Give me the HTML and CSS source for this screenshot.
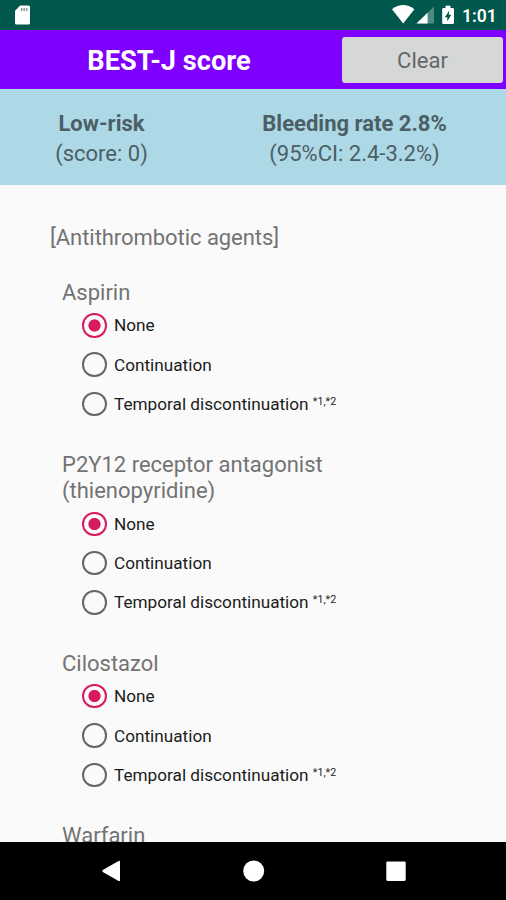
FILE: index.html
```html
<!DOCTYPE html>
<html lang="en">
<head>
<meta charset="utf-8">
<title>BEST-J score</title>
<link rel="stylesheet" href="styles.css">
</head>
<body>
<div class="screen">
  <div class="status">
    <svg class="sd" width="17" height="20" viewBox="0 0 17 20"><path fill="#fff" d="M6.200.5H14.400q1.600 0 1.600 1.600v15.800q0 1.600-1.600 1.600H2.600Q1 19.500 1 17.900V5.800z"/><path stroke="#87958f" stroke-width="1.500" d="M7.700 3v3M10.200 3v3M12.700 3v3"/></svg>
    <svg class="signals" width="66" height="22" viewBox="0 0 66 22"><path fill="#fff" d="M0 5.200Q11.200-3.200 22.400 5.200L11.200 19.500z"/><path fill="#4d8a80" d="M42 2.500V19.500H24.500z"/><path fill="#fff" d="M35.600 8.700V19.500H24.500z"/><path fill="#fff" d="M53.500 1.800h5v2.200h2.200q1.300 0 1.300 1.300v13.400q0 1.300-1.300 1.300h-9.200q-1.300 0-1.300-1.300V5.300q0-1.300 1.300-1.300h2z"/><path fill="#00574b" d="M57.300 6.500l-4.500 6.700h2.500v4l4-6.400h-2.500z"/></svg>
    <span class="clock">1:01</span>
  </div>
  <header class="bar">
    <h1 class="title">BEST-J score</h1>
    <button class="clear">Clear</button>
  </header>
  <section class="result">
    <div class="risk"><strong>Low-risk</strong><span>(score: 0)</span></div>
    <div class="rate"><strong>Bleeding rate 2.8%</strong><span>(95%CI: 2.4-3.2%)</span></div>
  </section>
  <main class="content">
    <h2 class="section">[Antithrombotic agents]</h2>
    <div class="group">
      <h3 class="drug">Aspirin</h3>
      <label class="option"><i class="radio on"></i><span>None</span></label>
      <label class="option"><i class="radio"></i><span>Continuation</span></label>
      <label class="option"><i class="radio"></i><span>Temporal discontinuation <sup>*1,*2</sup></span></label>
    </div>
    <div class="group">
      <h3 class="drug">P2Y12 receptor antagonist<br>(thienopyridine)</h3>
      <label class="option"><i class="radio on"></i><span>None</span></label>
      <label class="option"><i class="radio"></i><span>Continuation</span></label>
      <label class="option"><i class="radio"></i><span>Temporal discontinuation <sup>*1,*2</sup></span></label>
    </div>
    <div class="group">
      <h3 class="drug">Cilostazol</h3>
      <label class="option"><i class="radio on"></i><span>None</span></label>
      <label class="option"><i class="radio"></i><span>Continuation</span></label>
      <label class="option"><i class="radio"></i><span>Temporal discontinuation <sup>*1,*2</sup></span></label>
    </div>
    <div class="group">
      <h3 class="drug">Warfarin</h3>
    </div>
  </main>
  <nav class="nav">
    <svg width="20" height="22" viewBox="0 0 20 22"><path fill="#fff" d="M18 .8q1 0 1 1v18.400q0 1-1 1L1.800 12q-1.200-1 0-2z"/></svg>
    <svg width="22" height="22" viewBox="0 0 22 22"><circle cx="10.700" cy="11" r="10.500" fill="#fff"/></svg>
    <svg width="20" height="22" viewBox="0 0 20 22"><rect x=".3" y="1.500" width="19.400" height="19.400" rx="1.300" fill="#fff"/></svg>
  </nav>
</div>
</body>
</html>
```
FILE: styles.css
```css
* { box-sizing: border-box; }
body { margin: 0; font-family: Roboto, "Liberation Sans", sans-serif; }
h1, h2, h3 { margin: 0; font-weight: 400; }
.screen {
  width: 506px;
  height: 900px;
  display: flex;
  flex-direction: column;
  overflow: hidden;
  background: #fafafa;
  color: #737373;
}
.status {
  flex: none;
  height: 29.5px;
  display: flex;
  align-items: center;
  padding: 0 10px 0 14px;
  background: #00574b;
}
.sd { margin-top: 1px; }
.signals { margin-left: auto; margin-top: 1px; margin-right: -1px; }
.clock {
  width: 34px;
  margin-left: 5px;
  margin-top: 2px;
  color: #fff;
  font-size: 17.5px;
  font-weight: 600;
  white-space: nowrap;
}
.bar {
  flex: none;
  height: 59px;
  display: flex;
  align-items: center;
  background: #7f00ff;
}
.title {
  width: 338px;
  padding-top: 4px;
  color: #fff;
  font-size: 27.2px;
  font-weight: 700;
  line-height: 32px;
  text-align: center;
}
.clear {
  width: 161px;
  height: 46px;
  margin: 2px 0 0 4px;
  padding: 2px 0 0;
  border: 0;
  border-radius: 3px;
  background: #d6d7d7;
  color: #656666;
  font: 400 22px/26px Roboto, sans-serif;
}
.result {
  flex: none;
  height: 96px;
  display: flex;
  padding-top: 20px;
  background: #add8e6;
  color: #4c5f65;
  font-size: 22px;
  line-height: 30px;
  text-align: center;
}
.result div { display: flex; flex-direction: column; }
.risk { width: 203px; }
.rate { width: 303px; }
.content {
  flex: 1;
  min-height: 0;
  overflow: hidden;
  padding: 40px 0 0 50px;
}
.section { font-size: 22px; line-height: 26px; margin-bottom: 29.3px; letter-spacing: -.05px; }
.group { margin: 0 0 28.5px 12px; }
.drug { font-size: 22px; line-height: 26px; }
.option {
  display: flex;
  align-items: center;
  gap: 7.5px;
  height: 39.3px;
  padding-left: 20px;
  color: #1c1c1c;
  font-size: 17.2px;
}
.radio {
  flex: none;
  width: 24.5px;
  height: 24.5px;
  border: 2.5px solid #666;
  border-radius: 50%;
}
.radio.on {
  border-color: #d81b60;
  background: radial-gradient(circle, #d81b60 5.7px, transparent 6.5px);
}
sup { font-size: 10.7px; line-height: 0; vertical-align: 5px; }
.nav {
  flex: none;
  height: 58px;
  display: flex;
  align-items: center;
  justify-content: space-between;
  padding: 0 100px 0 101px;
  background: #000;
}
```
